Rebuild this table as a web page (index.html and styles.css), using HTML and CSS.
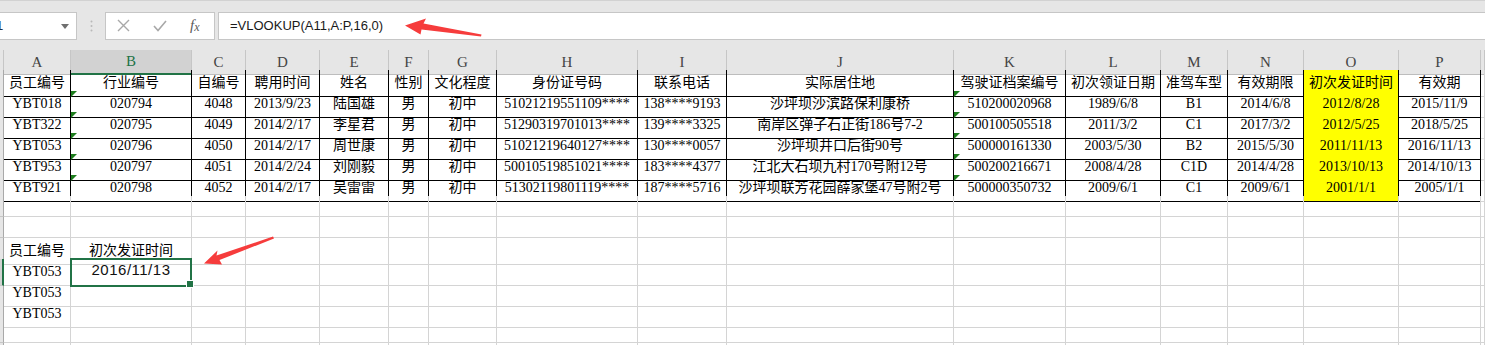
FILE: index.html
```html
<!DOCTYPE html>
<html lang="zh-CN">
<head>
<meta charset="utf-8">
<title>VLOOKUP</title>
<link rel="stylesheet" href="styles.css">
</head>
<body>
<div class="topbar">
  <div class="fbar">
    <div class="namebox">
      <span class="nm">B11</span>
      <svg class="dd" width="8" height="5" viewBox="0 0 8 5"><polygon points="0,0 8,0 4,5" fill="#6f6f6f"/></svg>
    </div>
    <div class="grip">
      <svg width="3" height="12" viewBox="0 0 3 12"><circle cx="1.5" cy="1.5" r="1" fill="#b9b9b9"/><circle cx="1.5" cy="6" r="1" fill="#b9b9b9"/><circle cx="1.5" cy="10.5" r="1" fill="#b9b9b9"/></svg>
    </div>
    <div class="fxbox">
      <svg width="108" height="26" viewBox="0 0 108 26">
        <path d="M12 7 L23 18 M23 7 L12 18" stroke="#a8a8a8" stroke-width="1.4" fill="none"/>
        <path d="M48 13 L52 17.5 L60 8" stroke="#a8a8a8" stroke-width="1.6" fill="none"/>
        <text x="84" y="17" font-family="Liberation Serif, serif" font-style="italic" font-size="15" fill="#5a5a5a">f<tspan font-size="12" dy="1">x</tspan></text>
      </svg>
    </div>
    <div class="formula">=VLOOKUP(A11,A:P,16,0)</div>
  </div>
</div>

<div class="sheet">
  <div class="row head">
    <i class="h"></i><div class="h">A</div><div class="h hs">B</div><div class="h">C</div><div class="h">D</div><div class="h">E</div><div class="h">F</div><div class="h">G</div><div class="h">H</div><div class="h">I</div><div class="h">J</div><div class="h">K</div><div class="h">L</div><div class="h">M</div><div class="h">N</div><div class="h">O</div><div class="h">P</div><i class="h"></i>
  </div>

  <div class="row">
    <i class="r"></i><div class="t">员工编号</div><div class="t">行业编号</div><div class="t">自编号</div><div class="t">聘用时间</div><div class="t">姓名</div><div class="t">性别</div><div class="t">文化程度</div><div class="t">身份证号码</div><div class="t">联系电话</div><div class="t">实际居住地</div><div class="t">驾驶证档案编号</div><div class="t">初次领证日期</div><div class="t">准驾车型</div><div class="t">有效期限</div><div class="t y">初次发证时间</div><div class="t">有效期</div><i></i>
  </div>
  <div class="row">
    <i class="r"></i><div class="t">YBT018</div><div class="t g">020794</div><div class="t">4048</div><div class="t">2013/9/23</div><div class="t">陆国雄</div><div class="t">男</div><div class="t">初中</div><div class="t">51021219551109****</div><div class="t">138****9193</div><div class="t">沙坪坝沙滨路保利康桥</div><div class="t g">510200020968</div><div class="t">1989/6/8</div><div class="t">B1</div><div class="t">2014/6/8</div><div class="t y">2012/8/28</div><div class="t">2015/11/9</div><i></i>
  </div>
  <div class="row">
    <i class="r"></i><div class="t">YBT322</div><div class="t g">020795</div><div class="t">4049</div><div class="t">2014/2/17</div><div class="t">李星君</div><div class="t">男</div><div class="t">初中</div><div class="t">51290319701013****</div><div class="t">139****3325</div><div class="t">南岸区弹子石正街186号7-2</div><div class="t g">500100505518</div><div class="t">2011/3/2</div><div class="t">C1</div><div class="t">2017/3/2</div><div class="t y">2012/5/25</div><div class="t">2018/5/25</div><i></i>
  </div>
  <div class="row">
    <i class="r"></i><div class="t">YBT053</div><div class="t g">020796</div><div class="t">4050</div><div class="t">2014/2/17</div><div class="t">周世康</div><div class="t">男</div><div class="t">初中</div><div class="t">51021219640127****</div><div class="t">130****0057</div><div class="t">沙坪坝井口后街90号</div><div class="t g">500000161330</div><div class="t">2003/5/30</div><div class="t">B2</div><div class="t">2015/5/30</div><div class="t y">2011/11/13</div><div class="t">2016/11/13</div><i></i>
  </div>
  <div class="row">
    <i class="r"></i><div class="t">YBT953</div><div class="t g">020797</div><div class="t">4051</div><div class="t">2014/2/24</div><div class="t">刘刚毅</div><div class="t">男</div><div class="t">初中</div><div class="t">50010519851021****</div><div class="t">183****4377</div><div class="t">江北大石坝九村170号附12号</div><div class="t g">500200216671</div><div class="t">2008/4/28</div><div class="t">C1D</div><div class="t">2014/4/28</div><div class="t y">2013/10/13</div><div class="t">2014/10/13</div><i></i>
  </div>
  <div class="row">
    <i class="r"></i><div class="t">YBT921</div><div class="t g">020798</div><div class="t">4052</div><div class="t">2014/2/17</div><div class="t">吴雷雷</div><div class="t">男</div><div class="t">初中</div><div class="t">51302119801119****</div><div class="t">187****5716</div><div class="t">沙坪坝联芳花园薛家堡47号附2号</div><div class="t g">500000350732</div><div class="t">2009/6/1</div><div class="t">C1</div><div class="t">2009/6/1</div><div class="t y">2001/1/1</div><div class="t">2005/1/1</div><i></i>
  </div>

  <div class="row">
    <i class="r"></i>
    <i></i><i></i><i></i><i></i><i></i>
    <i></i><i></i><i></i><i></i><i></i>
    <i></i><i></i><i></i><i></i><i></i>
    <i></i><i></i>
  </div>
  <div class="row">
    <i class="r"></i>
    <i></i><i></i><i></i><i></i><i></i>
    <i></i><i></i><i></i><i></i><i></i>
    <i></i><i></i><i></i><i></i><i></i>
    <i></i><i></i>
  </div>
  <div class="row">
    <i class="r"></i>
    <div>员工编号</div><div>初次发证时间</div>
    <i></i><i></i><i></i><i></i><i></i>
    <i></i><i></i><i></i><i></i><i></i>
    <i></i><i></i><i></i><i></i><i></i>
  </div>
  <div class="row cur">
    <i class="r rs"></i>
    <div>YBT053</div><div class="sel">2016/11/13</div>
    <i></i><i></i><i></i><i></i><i></i>
    <i></i><i></i><i></i><i></i><i></i>
    <i></i><i></i><i></i><i></i><i></i>
  </div>
  <div class="row">
    <i class="r"></i>
    <div>YBT053</div>
    <i></i><i></i><i></i><i></i><i></i>
    <i></i><i></i><i></i><i></i><i></i>
    <i></i><i></i><i></i><i></i><i></i>
    <i></i>
  </div>
  <div class="row">
    <i class="r"></i>
    <div>YBT053</div>
    <i></i><i></i><i></i><i></i><i></i>
    <i></i><i></i><i></i><i></i><i></i>
    <i></i><i></i><i></i><i></i><i></i>
    <i></i>
  </div>
  <div class="row">
    <i class="r"></i>
    <i></i><i></i><i></i><i></i><i></i>
    <i></i><i></i><i></i><i></i><i></i>
    <i></i><i></i><i></i><i></i><i></i>
    <i></i><i></i>
  </div>
  <div class="row">
    <i class="r"></i>
    <i></i><i></i><i></i><i></i><i></i>
    <i></i><i></i><i></i><i></i><i></i>
    <i></i><i></i><i></i><i></i><i></i>
    <i></i><i></i>
  </div>
</div>

<svg class="arrows" width="1485" height="345" viewBox="0 0 1485 345">
  <polygon points="405,25.5 426,18.5 423.5,23.5 481.5,34.5 481,36.5 421.5,29.5 420.5,34.5" fill="#f63c3c"/>
  <polygon points="204,263.5 217.5,250.5 216.5,255.5 273,236.5 274,238.5 219.5,260 222,264.5" fill="#f63c3c"/>
</svg>
</body>
</html>
```

FILE: styles.css
```css
* { box-sizing: border-box; margin: 0; padding: 0; }
html, body { width: 1485px; height: 345px; overflow: hidden; }
body {
  background: #fff;
  font-family: "Liberation Sans", "Noto Sans CJK SC", sans-serif;
  position: relative;
}

/* ---------- formula bar ---------- */
.topbar {
  height: 50px;
  background: #e6e6e6;
  border-top: 1px solid #d2d2d2;
  padding-top: 11px;
}
.fbar { display: flex; height: 28px; }
.namebox {
  width: 78px;
  margin-left: -1px;
  border: 1px solid #c6c6c6;
  background: #fff;
  display: flex;
  align-items: center;
  justify-content: space-between;
  padding-right: 7px;
  overflow: hidden;
  font-size: 13px;
  color: #1f2a44;
}
.nm { margin-left: -19px; line-height: 26px; }
.grip {
  width: 28px;
  display: flex;
  align-items: center;
  justify-content: center;
}
.fxbox {
  width: 110px;
  border: 1px solid #c6c6c6;
  background: #fff;
  display: flex;
}
.formula {
  flex: 1;
  margin-left: 3px;
  margin-right: -2px;
  border: 1px solid #c6c6c6;
  background: #fff;
  padding-left: 11px;
  font-size: 13px;
  line-height: 26px;
  color: #1a1a1a;
}

/* ---------- sheet grid ---------- */
.sheet {
  display: flex;
  flex-direction: column;
  font-family: "Liberation Serif", "Noto Sans CJK SC", serif;
  font-size: 14px;
  color: #000;
}
.row {
  display: grid;
  grid-template-columns: 4px 67px 121px 54px 74px 69px 40px 68px 141px 89px 227px 112px 95px 67px 76px 95px 82px 1fr;
  height: 21px;
  flex: none;
}
.row.head { height: 20px; }
.row.cur { position: relative; z-index: 2; }
.row > * {
  display: block;
  font-style: normal;
  border-right: 1px solid #d4d4d4;
  border-bottom: 1px solid #d4d4d4;
  text-align: center;
  white-space: nowrap;
  line-height: 26px;
  position: relative;
}
.row > .h {
  background: #e6e6e6;
  border-right-color: #c6c6c6;
  border-bottom-color: #bdbdbd;
  color: #444;
  font-size: 15px;
  line-height: 24px;
}
.row > .hs {
  background: #d2d2d2;
  color: #217346;
  border-bottom: 2px solid #217346;
  line-height: 23px;
}
.row > .r {
  background: #e6e6e6;
  border-right-color: #a9a9a9;
  border-bottom-color: #c6c6c6;
}
.row > .rs {
  background: #d2d2d2;
  border-right: 2px solid #217346;
}
.row > .t {
  border-right-color: #000;
  border-bottom-color: #000;
}
.row > .y { background: #ffff00; }

.g::before {
  content: "";
  position: absolute;
  top: 0;
  left: 0;
  border-top: 6px solid #1d7d1d;
  border-right: 6px solid transparent;
}

.row > .sel {
  z-index: 2;
  font-family: "Liberation Sans", sans-serif;
  font-size: 15px;
  letter-spacing: 0.5px;
  line-height: 22px;
  color: #111;
}
.sel::after {
  content: "";
  position: absolute;
  top: -1px;
  left: -1px;
  right: -1px;
  bottom: -2px;
  border: 2px solid #217346;
}
.sel::before {
  content: "";
  position: absolute;
  right: -3px;
  bottom: -3px;
  width: 6px;
  height: 6px;
  background: #217346;
  border: 1px solid #fff;
  z-index: 1;
}

.arrows {
  position: absolute;
  left: 0;
  top: 0;
  pointer-events: none;
}
```
